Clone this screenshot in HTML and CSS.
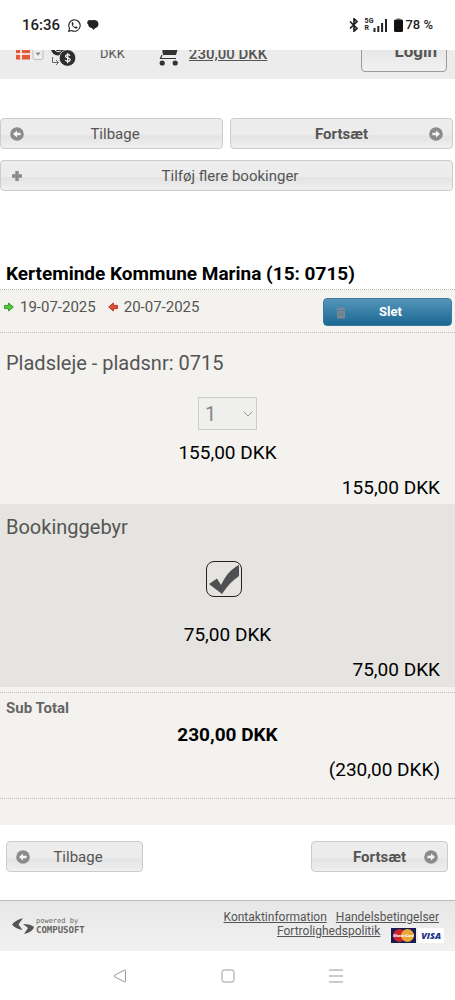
FILE: index.html
```html
<!DOCTYPE html>
<html lang="da">
<head>
<meta charset="utf-8">
<meta name="viewport" content="width=device-width, initial-scale=1">
<title>Booking</title>
<link rel="stylesheet" href="styles.css">
</head>
<body>
<svg class="defs" width="0" height="0" aria-hidden="true">
  <symbol id="left" viewBox="0 0 14 14"><circle cx="7" cy="7" r="6.8" fill="#8b8b8b"/><path d="M3 7l4-3.6v2.4h3.6v2.4H7v2.4z" fill="#f4f4f4"/></symbol>
  <symbol id="right" viewBox="0 0 14 14"><circle cx="7" cy="7" r="6.8" fill="#8b8b8b"/><path d="M11 7L7 3.4v2.4H3.4v2.4H7v2.4z" fill="#f4f4f4"/></symbol>
</svg>

<div class="status">
  <div class="status-side">
    <span class="clock">16:36</span>
    <svg width="13" height="13" viewBox="0 0 13 13"><path d="M.7 12.3l.8-3A5.7 5.7 0 1 1 3.700 11.500z" fill="none" stroke="#222" stroke-width="1.100"/><path d="M4.300 3.300c-1.500 1.500.2 4.300 2.300 5.600 1.500.9 2.700.7 3.100-.5L8 7.300l-.9.8C6 7.600 5.400 6.800 5 5.900l.6-.8L5 3.200z" fill="#222"/></svg>
    <svg width="12" height="12" viewBox="0 0 12 12"><path d="M1 1.500l2.200-.6 2.300.4C8.500.5 11.500 2 11.500 5c0 2.500-2 4-3.500 4.200L6.500 11 5.300 9.300C2.800 9 1.300 7.500 1.200 5.500L0 4z" fill="#222"/></svg>
  </div>
  <div class="status-side right">
    <svg width="10" height="14" viewBox="0 0 10 14"><path d="M1 3.500l7 7L5 13.200V.8L8 3.500l-7 7" fill="none" stroke="#222" stroke-width="1.700"/></svg>
    <span class="signal"><span class="net"><b>5G</b><b class="roam">R</b></span><svg width="15" height="15" viewBox="0 0 15 15"><path d="M1.500 10v4M5.300 8v6M9.100 5v9M13 1v13" stroke="#222" stroke-width="2"/></svg></span>
    <span class="battery"><svg width="9" height="14" viewBox="0 0 9 14"><path d="M2.500 0h4v3h-4z" fill="#aaa"/><rect y="1.500" width="9" height="12.500" rx="1.500" fill="#111"/></svg>78 %</span>
  </div>
</div>

<header class="top">
  <button class="lang" aria-label="Sprog">
    <svg width="14" height="11" viewBox="0 0 14 11"><path fill="#e25a38" d="M0 0h14v9.500H0z"/><path d="M5 0v9.500M0 4h14" stroke="#fff" stroke-width="1.600"/></svg>
    <svg width="12" height="11" viewBox="0 0 12 11"><rect x="1" y="-3" width="10" height="12.500" rx="2" fill="#f0f0f0" stroke="#bbb"/><path d="M3.500 2.500h5L6 5.800z" fill="#888"/></svg>
  </button>
  <svg class="currency" width="25" height="18" viewBox="0 0 25 18"><circle cx="7" cy="-1.500" r="7" fill="#2d2d2f"/><path d="M4 0c1.500 2 4 2 6 1" stroke="#fff" fill="none"/><circle cx="16.500" cy="8" r="8.300" fill="#2d2d2f" stroke="#ececec" stroke-width=".8"/><path d="M19 5.700c-1-1.700-4.500-1.500-4.500.5s4.700 1.300 4.700 3.500-3.800 2.200-5 .3M16.700 3v10.200" fill="none" stroke="#fff" stroke-width="1.200"/><path d="M1.500 7v5.500H7M5 10l2.500 2.500L5 15" fill="none" stroke="#666"/></svg>
  <span class="code">DKK</span>
  <a class="cart" href="#"><svg width="20" height="17" viewBox="0 0 20 17"><path d="M3-2h16l-2 7H4z" fill="#333"/><path d="M3 5l-1.500 3.500H17" fill="none" stroke="#333" stroke-width="1.200"/><circle cx="3.200" cy="13" r="2.600" fill="#333"/><circle cx="16.200" cy="13" r="2.600" fill="#333"/></svg><span>230,00 DKK</span></a>
  <button class="login">Login</button>
</header>

<main>
  <nav class="actions">
    <button class="btn back"><svg class="ico start"><use href="#left"/></svg>Tilbage</button>
    <button class="btn strong">Fortsæt<svg class="ico end"><use href="#right"/></svg></button>
    <button class="btn wide back"><svg class="ico start" viewBox="0 0 14 14"><path d="M7 2v10M2 7h10" stroke="#8b8b8b" stroke-width="3.400"/></svg>Tilføj flere bookinger</button>
  </nav>

  <h1>Kerteminde Kommune Marina (15: 0715)</h1>
  <section class="booking">
    <div class="dates">
      <svg width="10" height="10" viewBox="0 0 10 10"><path d="M.6 3.400h4V1l4.700 4-4.700 4V6.600h-4z" fill="#58c63c" stroke="#2f9a22"/></svg><time>19-07-2025</time>
      <svg class="depart" width="10" height="10" viewBox="0 0 10 10"><path d="M9.400 3.400h-4V1L.7 5l4.700 4V6.600h4z" fill="#e2503a" stroke="#b8301f"/></svg><time>20-07-2025</time>
      <button class="delete"><svg width="10" height="12" viewBox="0 0 10 12"><path d="M.3 2.500h9.400M3 2V.8h4V2" fill="none" stroke="#7d8a92" stroke-width="1.300"/><path d="M1 4h8v6.500q0 1-1 1H2q-1 0-1-1z" fill="#7d8a92"/><path d="M3.200 5.500v4M5 5.500v4M6.800 5.500v4" stroke="#4f7690" stroke-width=".7"/></svg>Slet</button>
    </div>
    <div class="item">
      <label class="name" for="qty">Pladsleje - pladsnr: 0715</label>
      <span class="qty"><select id="qty" disabled><option>1</option></select><svg width="10" height="6" viewBox="0 0 10 6"><path d="M.5.500L5 5 9.500.500" fill="none" stroke="#999"/></svg></span>
      <span class="price">155,00 DKK</span>
      <span class="sum">155,00 DKK</span>
    </div>
    <div class="item fee">
      <label class="name" for="fee">Bookinggebyr</label>
      <span class="check"><input type="checkbox" id="fee" checked><svg viewBox="0 0 36 36"><path d="M3 23l8-5.500 4 6.500C20 14 25 8 33 4v11C27 19 21 25 16 33z" fill="#505052"/></svg></span>
      <span class="price">75,00 DKK</span>
      <span class="sum">75,00 DKK</span>
    </div>
    <div class="total">
      <strong class="label">Sub Total</strong>
      <strong class="price">230,00 DKK</strong>
      <span class="sum">(230,00 DKK)</span>
    </div>
  </section>

  <nav class="bottom">
    <button class="btn"><svg class="ico"><use href="#left"/></svg><span>Tilbage</span></button>
    <button class="btn strong"><span>Fortsæt</span><svg class="ico"><use href="#right"/></svg></button>
  </nav>
</main>

<footer class="foot">
  <div class="brand">
    <svg width="22" height="18" viewBox="0 0 22 18"><path d="M11 1C6 2.500 2 4.500 0 7.500c2 3 6 4.500 10.500 5.500L6.500 7.500zM11 7l5 4-4 6c5-1 9-3.500 10-7-2-2-6-3-11-3z" fill="#555"/></svg>
    <div class="brand-text"><small>powered by</small><b>COMPUSOFT</b></div>
  </div>
  <div class="links">
    <div><a href="#">Kontaktinformation</a><a href="#">Handelsbetingelser</a></div>
    <div><a href="#">Fortrolighedspolitik</a><span class="cards"><svg width="25" height="15" viewBox="0 0 25 15"><path d="M0 0h25v15H0z" fill="#171c50"/><circle cx="8.500" cy="7.500" r="6.500" fill="#c9242b"/><circle cx="16.500" cy="7.500" r="6.500" fill="#eaa63a"/><text x="12.500" y="9" class="mc">MasterCard</text></svg><i class="visa">VISA</i></span></div>
  </div>
</footer>

<nav class="system">
  <button aria-label="Tilbage"><svg width="14" height="14" viewBox="0 0 14 14"><path d="M12.500 1.500v11q0 .8-.8.400L1.200 7.600q-1-.6 0-1.200L11.700 1q.8-.4.8.5z"/></svg></button>
  <button aria-label="Hjem"><svg width="14" height="14" viewBox="0 0 14 14"><rect x="1" y="1" width="12" height="12" rx="2.500"/></svg></button>
  <button aria-label="Menu"><svg width="14" height="14" viewBox="0 0 14 14"><path d="M0 1h14M0 7h14M0 13h14"/></svg></button>
</nav>
</body>
</html>
```

FILE: styles.css
```css
* { box-sizing: border-box; }
body { margin: 0; background: #fff; color: #555; font: 15px/20px Roboto, sans-serif; }
button { font: inherit; color: inherit; margin: 0; padding: 0; border: 0; background: none; }
svg { display: block; flex: none; }
a { color: #555; }
.defs { position: absolute; }

.status { height: 50px; padding: 0 22px; display: flex; align-items: center; justify-content: space-between; color: #222; }
.status-side { display: flex; align-items: center; gap: 6px; }
.status-side.right { gap: 6px; font-size: 13px; font-weight: 500; }
.clock { font-weight: 500; margin-right: 2px; }
.signal, .battery { display: flex; align-items: center; gap: 2px; }
.signal { gap: 0; }
.net { display: flex; flex-direction: column; font-size: 7px; line-height: 7px; text-align: right; }
.roam { text-align: left; }

.top { height: 29px; padding: 0 8px 0 16px; overflow: hidden; display: flex; align-items: flex-start; background: #ececec; }
.lang { display: flex; gap: 2px; }
.currency { margin-left: 7px; }
.code { margin: -6px 0 0 24px; font-size: 13px; }
.cart { display: flex; gap: 10px; margin-left: 34px; }
.cart span { margin-top: -6px; font-weight: 500; }
.login { width: 86px; height: 36px; margin: -14px 0 0 auto; padding: 0 9px 6px 0; text-align: right; font-size: 17px; font-weight: 700; border: 1px solid #999; border-radius: 4px; background: linear-gradient(#e2e2e2, #f0f0f0); }

.actions { display: grid; grid-template-columns: 1fr 1fr; gap: 11px 7px; padding: 39px 2px 0 0; }
.btn { position: relative; height: 31px; border: 1px solid #ccc; border-radius: 4px; background: linear-gradient(#ededed 0, #ececec 55%, #e3e3e3 58%, #f0f0f0 100%); padding: 0 7px; }
.back { padding-left: 14px; }
.strong { font-weight: 700; }
.wide { grid-column: 1 / -1; }
.ico { width: 14px; height: 14px; }
.start, .end { position: absolute; top: 8px; }
.start { left: 9px; }
.end { right: 9px; }

h1 { margin: 73px 0 0; padding: 0 6px 5px; font-size: 19px; line-height: 20px; font-weight: 700; color: #000; border-bottom: 1px dotted #bbb; }
.booking { background: #f3f2ee; padding-bottom: 26px; }
.dates { display: flex; align-items: flex-start; padding: 7px 3px 6px 4px; min-height: 43px; border-bottom: 1px dotted #bbb; }
.dates svg { margin-top: 5px; }
.dates time { margin-left: 6px; }
.dates .depart { margin-left: 12px; }
.delete { display: flex; width: 129px; height: 28px; margin: 1px 0 0 auto; align-items: center; padding-left: 12px; color: #fff; font-size: 13px; font-weight: 700; border: 1px solid #3c7a9c; border-radius: 4px; background: linear-gradient(#5596b9, #1a6795); }
.delete svg { margin: 2px 33px 0 0; }
.item, .total { display: flex; flex-direction: column; align-items: center; font-size: 19px; line-height: 24px; color: #000; }
.item { padding: 18px 6px 4px; }
.fee { padding: 11px 6px 5px; background: #e5e4e0; }
.name { align-self: flex-start; font-size: 20px; color: #555; }
.qty, .check { display: grid; }
.qty { margin: 22px 0 11px; align-items: center; }
.qty select, .qty svg { grid-area: 1 / 1; }
.qty select { appearance: none; width: 59px; height: 33px; padding: 0 6px; font: 20px Roboto, sans-serif; color: #888; opacity: 1; border: 1px solid #ccc; border-radius: 0; background: #efefed; }
.qty svg { justify-self: end; margin-right: 4px; pointer-events: none; }
.check { width: 36px; height: 36px; margin: 22px 11px 26px 4px; }
.check input, .check svg { grid-area: 1 / 1; width: 36px; height: 36px; margin: 0; }
.check input { appearance: none; border: 1px solid #222; border-radius: 8px; }
.check svg { pointer-events: none; }
.sum { align-self: flex-end; margin: 11px 9px 0 0; }
.total { margin-top: 5px; padding: 5px 6px 16px; border-top: 1px dotted #bbb; border-bottom: 1px dotted #bbb; }
.total strong { font-weight: 700; }
.total .label { align-self: flex-start; margin-bottom: 5px; font-size: 15px; line-height: 20px; color: #666; }

.bottom { display: flex; justify-content: space-between; padding: 16px 7px 28px 6px; }
.bottom .btn { display: flex; width: 137px; align-items: center; padding: 0 9px; }
.bottom span { flex: 1; }
.bottom .btn:first-child span { padding-right: 7px; }
.bottom .btn:last-child span { padding-left: 14px; }

.foot { display: flex; justify-content: space-between; align-items: flex-start; min-height: 51px; padding: 9px 11px 0 12px; border-top: 1px solid #bbb; background: linear-gradient(#e7e7e7, #f1f1f1); font-size: 12px; line-height: 14px; }
.brand { display: flex; align-items: center; gap: 2px; margin-top: 7px; }
.brand-text { display: flex; flex-direction: column; color: #666; }
.brand small { font: 7px/7px "DejaVu Sans Mono", monospace; }
.brand b { font: 700 9px/10px "DejaVu Sans Mono", monospace; }
.links { display: flex; flex-direction: column; align-items: flex-end; }
.links > div { display: flex; gap: 9px; padding-right: 5px; }
.links > div + div { padding-right: 0; gap: 11px; }
.cards { display: flex; gap: 2px; margin-top: 4px; }
.visa { padding: 0 3px; background: #fff; color: #24318a; font: italic 800 9px/15px "Open Sans", sans-serif; }
.mc { font: italic 700 4px Roboto, sans-serif; fill: #fff; text-anchor: middle; }

.system { display: flex; justify-content: center; align-items: center; gap: 94px; height: 49px; }
.system svg { fill: none; stroke: #999; }
```
